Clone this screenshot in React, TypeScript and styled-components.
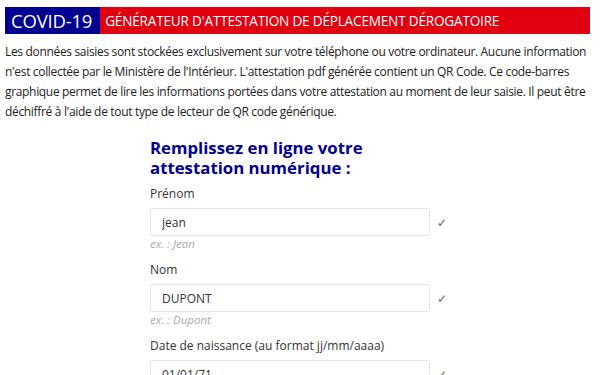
import React from "react";
import styled, { createGlobalStyle } from "styled-components";

const GlobalStyle = createGlobalStyle`
  html, body {
    margin: 0;
    padding: 0;
    background: #ffffff;
  }
  body {
    font-family: "Open Sans", "Noto Sans", "Liberation Sans", sans-serif;
    color: #222222;
  }
`;

const Page = styled.div`
  padding: 7px 10px 0 5px;
`;

const Header = styled.header`
  display: flex;
  align-items: stretch;
  height: 27px;
`;

const Brand = styled.div`
  display: flex;
  align-items: center;
  padding: 0 8px 0 6px;
  background-color: #000091;
  color: #ffffff;
  font-size: 18.5px;
  letter-spacing: -0.2px;
`;

const Banner = styled.div`
  flex: 1;
  display: flex;
  align-items: center;
  padding-left: 5px;
  background-color: #e1000f;
  color: #ffffff;
  font-size: 13.6px;
  text-transform: uppercase;
  letter-spacing: -0.2px;
`;

const Intro = styled.p`
  margin: 8px 0 0 0;
  font-size: 12px;
  line-height: 20px;
  letter-spacing: -0.33px;
`;

const Form = styled.form`
  width: 298px;
  margin: 16px auto 0 auto;
  padding-left: 3px;
  display: flex;
  flex-direction: column;
  gap: 9px;
`;

const Title = styled.h2`
  margin: 0 0 -2px 0;
  color: #000091;
  font-size: 16.8px;
  font-weight: 700;
  line-height: 20px;
`;

const Field = styled.div`
  display: flex;
  flex-direction: column;
`;

const Label = styled.label`
  font-size: 12px;
  line-height: 18px;
  color: #333333;
  margin-bottom: 5px;
`;

const InputRow = styled.div`
  display: flex;
  align-items: center;
  gap: 7px;
`;

const Input = styled.input`
  width: 280px;
  height: 28px;
  box-sizing: border-box;
  padding: 0 11px;
  border: 1px solid #e6e6e6;
  border-radius: 2px;
  font-family: inherit;
  font-size: 12px;
  color: #333333;
  outline: none;
`;

const Check = styled.span`
  font-size: 12px;
  color: #666666;
`;

const Hint = styled.small`
  font-size: 11.5px;
  line-height: 16px;
  font-style: italic;
  color: #aaaaaa;
`;

const fields = [
  { id: "firstname", label: "Prénom", value: "jean", hint: "ex. : Jean" },
  { id: "lastname", label: "Nom", value: "DUPONT", hint: "ex. : Dupont" },
  {
    id: "birthday",
    label: "Date de naissance (au format jj/mm/aaaa)",
    value: "01/01/71",
    hint: "ex. : 01/01/1970",
  },
];

export default function App() {
  return (
    <Page>
      <GlobalStyle />
      <Header>
        <Brand>COVID-19</Brand>
        <Banner>Générateur d'attestation de déplacement dérogatoire</Banner>
      </Header>
      <Intro>
        Les données saisies sont stockées exclusivement sur votre téléphone ou
        votre ordinateur. Aucune information n'est collectée par le Ministère de
        l'Intérieur. L'attestation pdf générée contient un QR Code. Ce
        code-barres graphique permet de lire les informations portées dans votre
        attestation au moment de leur saisie. Il peut être déchiffré à l'aide de
        tout type de lecteur de QR code générique.
      </Intro>
      <Form>
        <Title>
          Remplissez en ligne votre
          <br />
          attestation numérique :
        </Title>
        {fields.map((f) => (
          <Field key={f.id}>
            <Label htmlFor={f.id}>{f.label}</Label>
            <InputRow>
              <Input id={f.id} defaultValue={f.value} />
              <Check>✓</Check>
            </InputRow>
            <Hint>{f.hint}</Hint>
          </Field>
        ))}
      </Form>
    </Page>
  );
}
